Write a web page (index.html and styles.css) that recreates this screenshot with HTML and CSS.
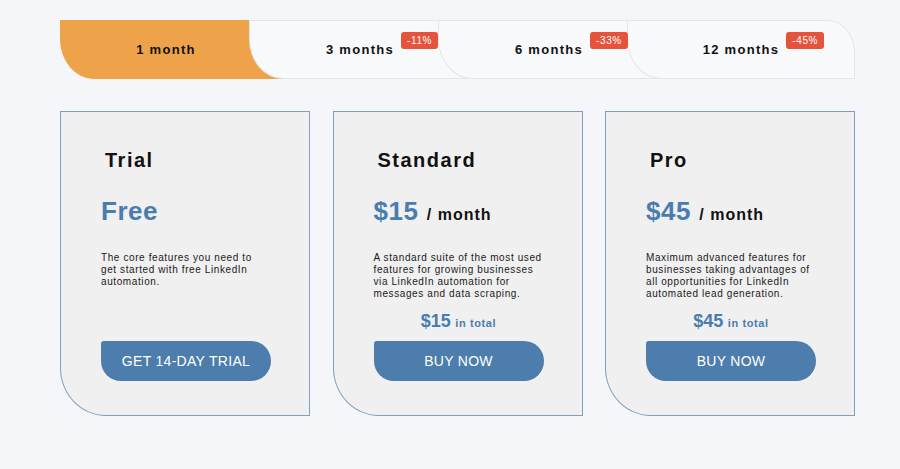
FILE: index.html
```html
<!DOCTYPE html>
<html lang="en">
<head>
<meta charset="utf-8">
<title>Pricing</title>
<link rel="stylesheet" href="styles.css">
</head>
<body>
<main class="page">
  <nav class="tabs">
    <div class="tab tab-active tab-first"><span class="tab-label">1 month</span></div>
    <div class="tab"><span class="tab-label">3 months<span class="badge">-11%</span></span></div>
    <div class="tab"><span class="tab-label">6 months<span class="badge">-33%</span></span></div>
    <div class="tab tab-last"><span class="tab-label">12 months<span class="badge">-45%</span></span></div>
  </nav>
  <section class="cards">
    <article class="card">
      <h2 class="card-title">Trial</h2>
      <div class="price"><span class="amount">Free</span></div>
      <p class="desc">The core features you need to get started with free LinkedIn automation.</p>
      <button class="btn">GET 14-DAY TRIAL</button>
    </article>
    <article class="card">
      <h2 class="card-title">Standard</h2>
      <div class="price"><span class="amount">$15</span> <span class="per">/ month</span></div>
      <p class="desc">A standard suite of the most used features for growing businesses via LinkedIn automation for messages and data scraping.</p>
      <div class="total"><span class="total-amount">$15</span> <span class="total-label">in total</span></div>
      <button class="btn">BUY NOW</button>
    </article>
    <article class="card">
      <h2 class="card-title">Pro</h2>
      <div class="price"><span class="amount">$45</span> <span class="per">/ month</span></div>
      <p class="desc">Maximum advanced features for businesses taking advantages of all opportunities for LinkedIn automated lead generation.</p>
      <div class="total"><span class="total-amount">$45</span> <span class="total-label">in total</span></div>
      <button class="btn">BUY NOW</button>
    </article>
  </section>
</main>
</body>
</html>
```
FILE: styles.css
```css
* { box-sizing: border-box; }
html, body {
  margin: 0;
  padding: 0;
  background: #f4f6f9;
  font-family: "Liberation Sans", Arial, sans-serif;
}
.page {
  width: 900px;
  height: 469px;
  padding: 20px 0 0 60px;
}
.tabs {
  display: flex;
  height: 59px;
}
.tab {
  position: relative;
  width: 228px;
  height: 59px;
  margin-left: -39px;
  display: flex;
  align-items: center;
  justify-content: center;
  padding-right: 6px;
  background: #f8f9fb;
  border: 1px solid #e3e6eb;
  border-bottom-left-radius: 34px 40px;
}
.tab-first {
  margin-left: 0;
  padding-right: 16px;
}
.tab-active {
  background: #eea24a;
  border-color: #eea24a;
}
.tab-last {
  padding-right: 0;
  border-top-right-radius: 28px 32px;
}
.tab-label {
  position: relative;
  font-size: 13px;
  font-weight: bold;
  letter-spacing: 1.3px;
  line-height: 16px;
  color: #111;
}
.badge {
  position: absolute;
  z-index: 2;
  left: calc(100% + 7px);
  top: -10px;
  height: 17px;
  padding: 0 6px;
  line-height: 17px;
  font-size: 10px;
  font-weight: normal;
  letter-spacing: 0.6px;
  color: #fff;
  background: #e5533c;
  border-radius: 3px;
  white-space: nowrap;
}
.cards {
  display: flex;
  gap: 22.5px;
  margin-top: 32px;
}
.card {
  width: 250px;
  height: 305px;
  display: flex;
  flex-direction: column;
  padding: 36px 0 34px 40px;
  background: #f0f0f0;
  border: 1px solid #7f9fc2;
  border-bottom-left-radius: 46px 48px;
}
.card-title {
  margin: 0 0 0 4px;
  font-size: 20px;
  line-height: 24px;
  font-weight: bold;
  letter-spacing: 1.5px;
  color: #111;
}
.price {
  margin-top: 24px;
  line-height: 30px;
  white-space: nowrap;
}
.amount {
  font-size: 26px;
  font-weight: bold;
  letter-spacing: 0.5px;
  color: #4a7daf;
}
.per {
  margin-left: 4px;
  font-size: 16px;
  font-weight: bold;
  letter-spacing: 1px;
  color: #111;
}
.desc {
  width: 169px;
  margin: 22px 0 0 0;
  font-size: 10px;
  line-height: 12px;
  letter-spacing: 0.6px;
  color: #1a1a1a;
}
.total {
  width: 170px;
  margin-top: 10px;
  line-height: 22px;
  text-align: center;
  color: #4a7daf;
  font-weight: bold;
}
.total-amount {
  font-size: 18px;
}
.total-label {
  font-size: 11px;
  letter-spacing: 0.6px;
}
.btn {
  margin-top: auto;
  width: 170px;
  height: 40px;
  padding: 0;
  border: none;
  border-radius: 3px 20px 20px 20px;
  background: #4c7dac;
  color: #fff;
  font-family: "Liberation Sans", Arial, sans-serif;
  font-size: 14px;
  letter-spacing: 0.3px;
  cursor: pointer;
}
```
